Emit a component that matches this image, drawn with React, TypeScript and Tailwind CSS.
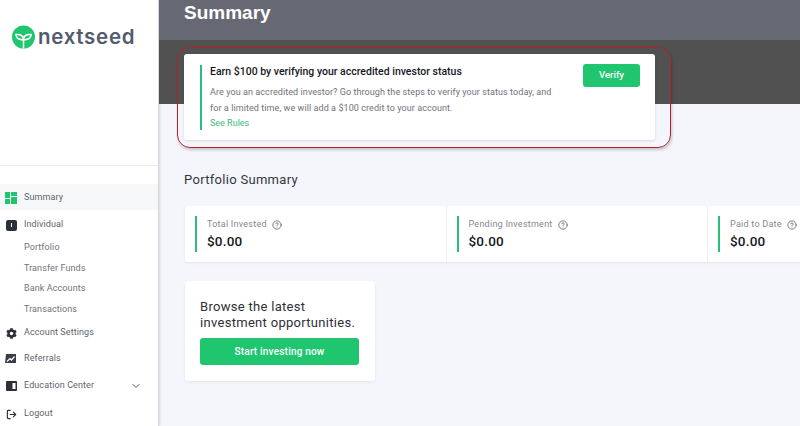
import { ChevronDown, CircleHelp, LogOut } from 'lucide-react';
import { FaCog } from 'react-icons/fa';

const subItems = ['Portfolio', 'Transfer Funds', 'Bank Accounts', 'Transactions'];
const stats = ['Total Invested', 'Pending Investment', 'Paid to Date'];

function Logo() {
  return (
    <div className="flex items-center gap-[3px] pl-3 pt-[25px]">
      <svg width="23" height="24" viewBox="0 0 24 24">
        <circle cx="12" cy="12" r="12" fill="#20c56f" />
        <path d="M12 24V13M12 15C12 10 8 9 4 9.5C4.500 13 8 15 12 15C12 10 16 9 20 9.500C19.500 13 16 15 12 15Z" fill="none" stroke="#fff" strokeWidth="1.600" />
      </svg>
      <span className="font-['Inter'] text-[20.500px] leading-6 font-semibold tracking-[0.7px] text-[#525a6e]">nextseed</span>
    </div>
  );
}

function SummaryIcon() {
  return (
    <svg width="12" height="12" viewBox="0 0 12 12" fill="#20c56f">
      <rect width="5" height="6" />
      <rect x="6" width="6" height="4" />
      <rect y="7" width="5" height="5" />
      <rect x="6" y="5" width="6" height="7" />
    </svg>
  );
}

function IndividualIcon() {
  return (
    <div className="flex h-[11px] w-[11px] items-center justify-center rounded-[2px] bg-[#2c3038]">
      <div className="h-[4px] w-[1px] bg-white" />
    </div>
  );
}

function ReferralsIcon() {
  return (
    <svg width="12" height="11" viewBox="0 0 12 11">
      <path d="M1 0H11V9H0Z" fill="#3a3d45" />
      <path d="M2 7.500L5 4.500L6.500 6L9.500 2.500" fill="none" stroke="#fff" strokeWidth="1.200" />
    </svg>
  );
}

function BookIcon() {
  return (
    <svg width="11" height="10" viewBox="0 0 11 10">
      <rect width="11" height="10" rx="1" fill="#2c3038" />
      <rect x="6.500" y="2" width="3" height="6" fill="#fff" />
    </svg>
  );
}

function NavRow({ icon, label, className }: { icon: React.ReactNode; label: string; className?: string }) {
  return (
    <div className={`flex items-center text-[9px] tracking-[0.1px] text-[#60636b] ${className ?? ''}`}>
      <div className="flex w-[24px] justify-center pr-[2px]">{icon}</div>
      <span>{label}</span>
    </div>
  );
}

function Sidebar() {
  return (
    <aside className="flex h-[426px] w-[159px] shrink-0 flex-col border-r-[1px] border-[#d5d6da] bg-white font-['Roboto'] shadow-[1px_0_3px_rgba(0,0,0,0.12)]">
      <Logo />
      <div className="mt-[116px] border-t border-[#ececef]" />
      <div className="mt-[18px] flex h-[26px] items-center bg-[#f7f8fa] pt-[1px]">
        <NavRow icon={<SummaryIcon />} label="Summary" />
      </div>
      <NavRow icon={<IndividualIcon />} label="Individual" className="mt-[8px] h-[14px]" />
      <div className="mt-[9px] flex flex-col gap-[7px] pl-[24px] text-[9px] leading-[13.500px] tracking-[0.1px] text-[#70737a]">
        {subItems.map((item) => (
          <div key={item}>{item}</div>
        ))}
      </div>
      <NavRow icon={<FaCog size={11} color="#2c3038" />} label="Account Settings" className="mt-[10px] h-[14px]" />
      <NavRow icon={<ReferralsIcon />} label="Referrals" className="mt-[12px] h-[14px]" />
      <div className="mt-[13px] flex h-[14px] items-center justify-between pr-[16px]">
        <NavRow icon={<BookIcon />} label="Education Center" />
        <ChevronDown size={12} color="#4f535c" />
      </div>
      <NavRow icon={<LogOut size={11} color="#2c3038" strokeWidth={2.500} />} label="Logout" className="mt-[14px] h-[14px]" />
    </aside>
  );
}

function StatCell({ label }: { label: string }) {
  return (
    <div className="flex h-[56px] w-[261.500px] shrink-0 items-center border-r border-[#eeeff2] pl-[10px]">
      <div className="h-[36px] w-[2px] bg-[#2dbd7b]" />
      <div className="ml-[10px]">
        <div className="flex items-center gap-[5px] text-[9px] leading-[13px] tracking-[0.25px] text-[#85888f]">
          {label}
          <CircleHelp size={10} color="#666" />
        </div>
        <div className="mt-[1px] text-[13.500px] leading-[18px] font-medium tracking-[0.2px] text-[#16181d]">$0.00</div>
      </div>
    </div>
  );
}

export default function App() {
  return (
    <div className="flex h-[426px] w-[800px] overflow-hidden bg-[#f5f6fb] font-['Roboto']">
      <Sidebar />
      <main className="min-w-0 flex-1">
        <div className="h-[40px] bg-[#666973] pl-[25px] font-['Liberation_Sans'] text-[19px] leading-[25px] font-bold text-white">Summary</div>
        <div className="h-[64px] bg-[#515151]" />

        <div className="relative mt-[-50px] ml-[25px] flex h-[86px] w-[471px] rounded-[3px] bg-white pt-[11px] pl-[16px] shadow-[0_1px_3px_rgba(0,0,0,0.12)]">
          <div className="h-[65px] w-[2px] bg-[#2dbd7b]" />
          <div className="ml-[8px] w-[352px]">
            <div className="text-[10.500px] leading-[14px] font-medium text-[#16181d]">Earn $100 by verifying your accredited investor status</div>
            <p className="mt-[5px] text-[9px] leading-[16px] tracking-[0.08px] text-[#6f7379]">
              Are you an accredited investor? Go through the steps to verify your status today, and for a limited time, we will add a $100 credit to your account.
            </p>
            <div className="text-[9px] leading-[14px] text-[#3dbb80]">See Rules</div>
          </div>
          <button className="mt-[-1px] ml-[21px] h-[23px] w-[57px] rounded-[3px] bg-[#20c56f] text-[9.500px] font-medium text-white">Verify</button>
          <div className="absolute top-[-7px] left-[-7px] h-[101px] w-[494px] rounded-[13px] border border-[#b8202a] shadow-[1px_2px_3px_rgba(0,0,0,0.2)]" />
        </div>

        <h2 className="mt-[32px] ml-[25px] text-[13px] leading-[16px] tracking-[0.3px] text-[#33363d]">Portfolio Summary</h2>

        <div className="mt-[18px] ml-[26px] flex w-[700px] rounded-[3px] bg-white shadow-[0_1px_3px_rgba(0,0,0,0.08)]">
          {stats.map((label) => (
            <StatCell key={label} label={label} />
          ))}
        </div>

        <div className="mt-[19px] ml-[26px] h-[100px] w-[190px] rounded-[3px] bg-white px-[15px] pt-[18px] shadow-[0_1px_3px_rgba(0,0,0,0.08)]">
          <div className="text-[13px] leading-[16px] tracking-[0.3px] text-[#2e3036]">Browse the latest investment opportunities.</div>
          <button className="mt-[7px] h-[27px] w-[159px] rounded-[3px] bg-[#20c56f] text-[10px] font-medium tracking-[0.2px] text-white">Start investing now</button>
        </div>
      </main>
    </div>
  );
}
